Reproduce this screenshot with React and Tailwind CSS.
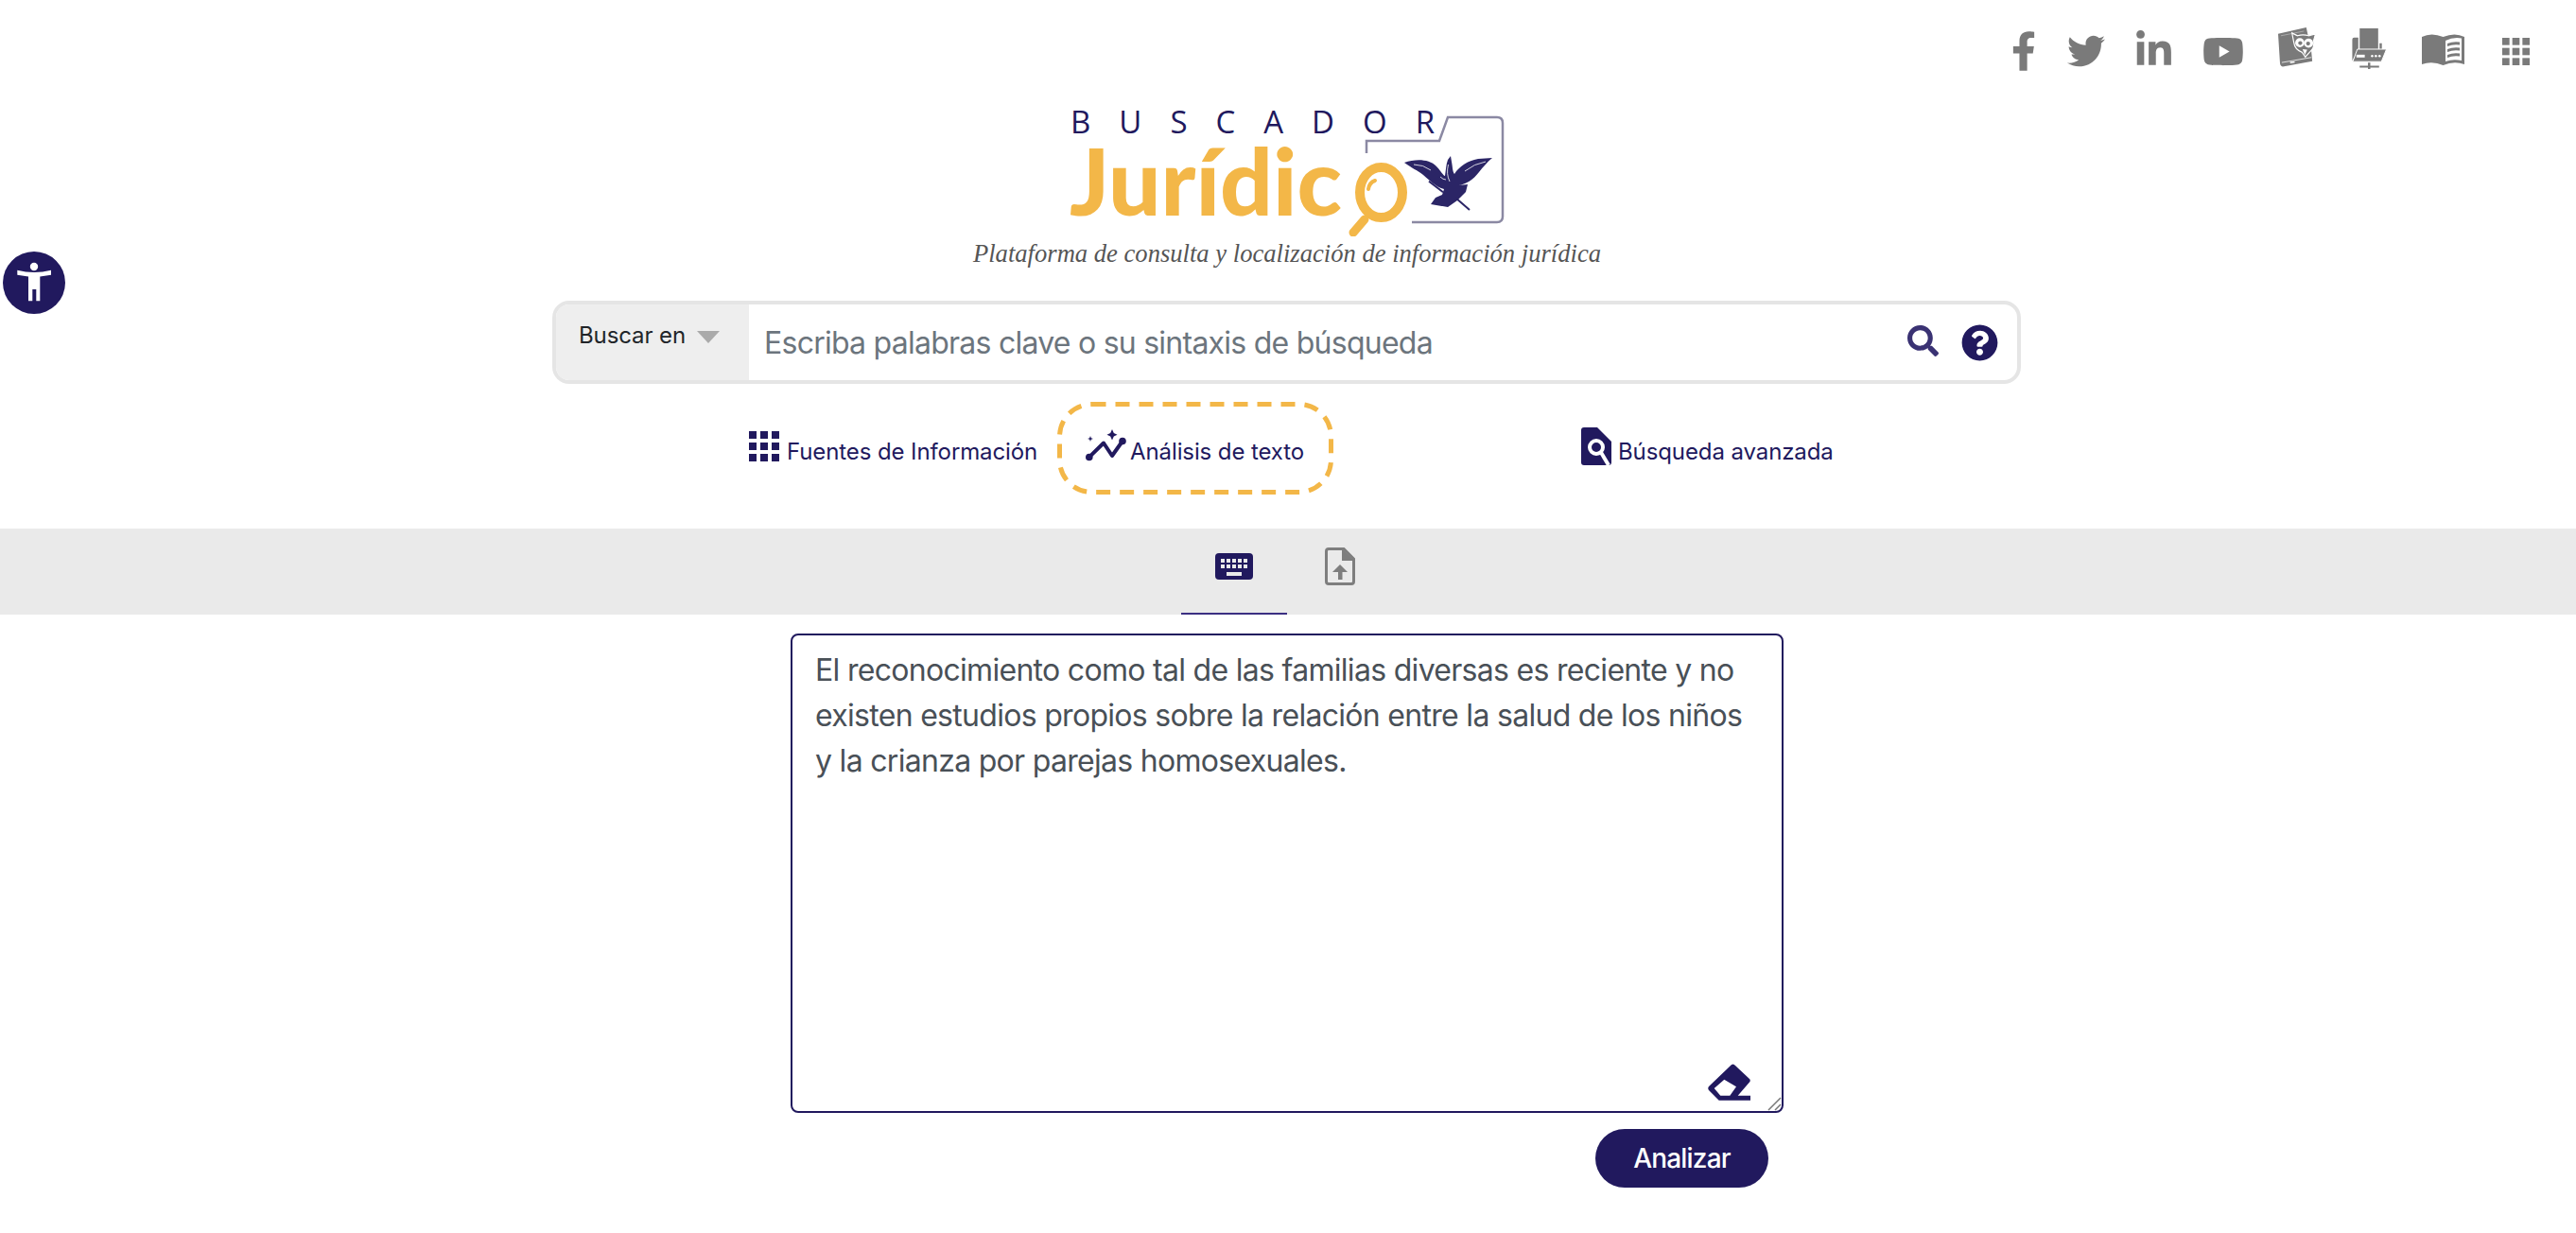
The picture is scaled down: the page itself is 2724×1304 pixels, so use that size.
import React from "react";
import { FaFacebookF, FaTwitter, FaLinkedinIn, FaYoutube, FaSearch, FaQuestionCircle } from "react-icons/fa";

const navy = "#21195e";

function OwlBook() {
  return (
    <svg viewBox="0 0 42 44" className="w-[41px] h-[43px] shrink-0 mb-[7px]" aria-hidden="true">
      <path d="M0 7 L30.500 0 L36 26 L37 36.500 L5 42.500 Q2 42 2 38 Z" fill="#7a7a7a" />
      <path d="M4 38 L36 32.500" stroke="#fff" strokeWidth="0.8" fill="none" />
      <path d="M3 9 L28 4" stroke="#fff" strokeWidth="0.6" fill="none" opacity="0.6" />
      <rect x="13" y="37" width="5" height="1.600" fill="#fff" transform="rotate(-10 15 38)" />
      <path d="M15 6 L21 9 Q27 7 33 9 L40.500 7 L38.500 14 Q40 22 34 27 L29.500 32 L26 27 Q18 24 17 16 Z" fill="#7a7a7a" stroke="#fff" strokeWidth="1.200" />
      <circle cx="23.500" cy="16.500" r="5" fill="#fff" />
      <circle cx="33" cy="17" r="5" fill="#fff" />
      <circle cx="24" cy="17" r="2.200" fill="#7a7a7a" />
      <circle cx="32.500" cy="17.500" r="2.200" fill="#7a7a7a" />
      <path d="M26.500 23.500 L31.500 24 L29 30 Z" fill="#fff" />
    </svg>
  );
}

function Printer() {
  return (
    <svg viewBox="0 0 38 44" className="w-[38px] h-[43px] shrink-0 mb-[6px]" aria-hidden="true">
      <rect x="8" y="0" width="20" height="24" fill="#7a7a7a" />
      <path d="M0 12 Q0 10 2 10 H6.500 V24 L0 35 Z M29.500 16 H32 V23 H29.500 Z" fill="#7a7a7a" />
      <path d="M5.500 22.500 H37 L31.500 36 H0.500 Z" fill="#7a7a7a" stroke="#fff" strokeWidth="1" />
      <rect x="4.500" y="28.500" width="9" height="3" fill="#fff" />
      <circle cx="21.500" cy="30" r="1.300" fill="#fff" />
      <circle cx="25.500" cy="30" r="1.300" fill="#fff" />
      <circle cx="29.500" cy="30" r="1.300" fill="#fff" />
      <path d="M17 37 H19.500 V40.500 H29 V42.500 H19.500 V44 H17 V42.500 H8 V40.500 H17 Z" fill="#7a7a7a" />
    </svg>
  );
}

function OpenBook() {
  return (
    <svg viewBox="0 0 45 34" className="w-[45px] h-[34px] shrink-0 mb-[4px]" aria-hidden="true">
      <path d="M0 4 Q10 -1 22.500 4 Q35 -1 45 4 V33 Q34 29 22.500 34 Q11 29 0 33 Z" fill="#7a7a7a" />
      <path d="M25 8 Q33 4 42 5.500 V29 Q33 27 25 30 Z" fill="#fff" />
      <path d="M27 11 Q33 8.500 40 9.500 V12.500 Q33 11.500 27 14 Z M27 17 Q33 14.500 40 15.500 V18.500 Q33 17.500 27 20 Z M27 23 Q33 20.500 40 21.500 V24.500 Q33 23.500 27 26 Z" fill="#7a7a7a" />
    </svg>
  );
}

function GridIcon({ size, color, gap }) {
  const cell = (24 - 2 * gap) / 3;
  const cells = [];
  for (let r = 0; r < 3; r++) {
    for (let c = 0; c < 3; c++) {
      cells.push(<rect key={`${r}-${c}`} x={c * (cell + gap)} y={r * (cell + gap)} width={cell} height={cell} fill={color} />);
    }
  }
  return <svg viewBox="0 0 24 24" width={size} height={size} className="shrink-0" aria-hidden="true">{cells}</svg>;
}

function AnalysisIcon() {
  return (
    <svg viewBox="0 0 43 34" className="w-[43px] h-[34px] shrink-0 mb-[6px]" aria-hidden="true">
      <path d="M3.600 29.700 L19 14.500 L28 28 L39 12.500" fill="none" stroke={navy} strokeWidth="4" strokeLinejoin="round" />
      <circle cx="3.800" cy="29.500" r="3.800" fill={navy} />
      <circle cx="39" cy="12.500" r="3.800" fill={navy} />
      <path d="M28 0 L29.800 4 L33.500 5.700 L29.800 7.400 L28 11.400 L26.200 7.400 L22.500 5.700 L26.200 4 Z" fill={navy} />
      <path d="M5 7 L5.800 9.200 L8 10 L5.800 10.800 L5 13 L4.200 10.800 L2 10 L4.200 9.200 Z" fill={navy} />
    </svg>
  );
}

function DocSearch() {
  return (
    <svg viewBox="0 0 32 40" className="w-[32px] h-[40px] shrink-0 mb-[4px]" aria-hidden="true">
      <path d="M3 0 H17 L32 15 V37 Q32 40 29 40 H3 Q0 40 0 37 V3 Q0 0 3 0 Z" fill={navy} />
      <circle cx="16" cy="21" r="7" fill="none" stroke="#fff" strokeWidth="4" />
      <path d="M21 26.500 L29 40" stroke="#fff" strokeWidth="4" />
    </svg>
  );
}

function KeyboardIcon() {
  const keys = [];
  for (let r = 0; r < 2; r++) {
    for (let c = 0; c < 5; c++) {
      keys.push(<rect key={`${r}-${c}`} x={6 + c * 6} y={6 + r * 6} width="4" height="4" fill="#eaeaea" />);
    }
  }
  return (
    <svg viewBox="0 0 40 28" className="w-[40px] h-[28px] shrink-0" aria-hidden="true">
      <rect x="0" y="0" width="40" height="28" rx="4" fill={navy} />
      {keys}
      <rect x="12" y="20" width="16" height="4" fill="#eaeaea" />
    </svg>
  );
}

function FileUp() {
  return (
    <svg viewBox="0 0 32 40" className="w-[32px] h-[40px] shrink-0" aria-hidden="true">
      <path d="M4 1.500 H20 L30.500 12 V36 Q30.500 38.500 28 38.500 H4 Q1.500 38.500 1.500 36 V4 Q1.500 1.500 4 1.500 Z" fill="none" stroke="#7e7e7e" strokeWidth="3" />
      <path d="M18 1 L31 14 H18 Z" fill="#7e7e7e" />
      <path d="M16 18 L24 26 H18.500 V34 H14 V26 H8 Z" fill="#7e7e7e" />
    </svg>
  );
}

function EraserIcon() {
  return (
    <svg viewBox="0 0 45 39" className="absolute right-[33px] bottom-[11px] w-[45px] h-[39px]" aria-hidden="true">
      <path
        fillRule="evenodd"
        d="M25 1 Q26.700 0 28.500 1.500 L44 16 Q45.500 17.700 44 19.500 L31.700 33.700 H45 V38.700 H11.700 L1 28 Q-0.500 26 1 24 Z M17.300 16.700 L6.700 26 L13.300 33.700 H23.300 L30 24.300 Z"
        fill={navy}
      />
    </svg>
  );
}

function AccessIcon() {
  return (
    <svg viewBox="0 0 66 66" className="w-full h-full" aria-hidden="true">
      <circle cx="33" cy="16" r="4.200" fill="#fff" />
      <path d="M15.300 19.700 Q33 24.500 51 19.700 V24.700 L39.300 26.500 V52.300 H35.300 V40 H31.300 V52.300 H27 V26.500 L15.300 24.700 Z" fill="#fff" />
    </svg>
  );
}

function Logo() {
  return (
    <div className="relative w-[470px] h-[142px] shrink-0">
      <svg viewBox="0 0 470 142" className="absolute inset-0 w-full h-full" aria-hidden="true">
        <path d="M318 54 V41 H395 L404 16 H456 Q462 16 462 22 V121 Q462 127 456 127 H366" fill="none" stroke="#8b89a3" strokeWidth="2.500" />
        <path
          d="M358 64 C370 60 384 60 392 68 C397 73 399 78 401 78 C402 72 402 66 404 61 L407 57 L408 63 C409 68 409 74 411 76 C416 68 425 62 436 60 L451 59 C446 63 441 69 437 74 C431 82 423 87 415 88 L425 87 L423 95 L417 101 L414 104 L404 111 L386 108 L391 101 L398 98 L400 92 C392 90 386 84 378 77 C372 72 366 70 358 64 Z"
          fill="#2b2566"
        />
        <path d="M384 83.700 L399 95.300 M412 101 L427 114" stroke="#2b2566" strokeWidth="2" />
        <path d="M404.500 66 Q402 76 406 84 M396 79 Q399 82 402 82 M368 66 Q378 66 386 72 M444 63 Q432 65 422 73" stroke="#fff" strokeWidth="0.800" fill="none" />
      </svg>
      <div className="absolute left-[5px] top-[8px] font-['Open_Sans',sans-serif] font-medium text-[33px] leading-[26px] text-[#21195e] tracking-[30px] whitespace-nowrap">BUSCADOR</div>
      <div className="absolute left-[4px] top-[40px] font-['Lato',sans-serif] font-black text-[98px] leading-[84px] text-[#f3b748] whitespace-nowrap">Jurídic</div>
      <svg viewBox="0 0 470 142" className="absolute inset-0 w-full h-full" aria-hidden="true">
        <ellipse cx="333.500" cy="95.500" rx="22.500" ry="26.500" fill="#fff" stroke="#f3b748" strokeWidth="10" />
        <path d="M316 124 L304 138" stroke="#f3b748" strokeWidth="9" strokeLinecap="round" />
        <path d="M320 92 Q321 85 327 83" fill="none" stroke="#f3b748" strokeWidth="4" strokeLinecap="round" />
      </svg>
    </div>
  );
}

export default function App() {
  return (
    <div className="relative w-full h-[1304px] overflow-hidden bg-white font-['Inter',sans-serif]">
      <div className="absolute left-[3px] top-[266px] w-[66px] h-[66px] rounded-full bg-[#21195e]">
        <AccessIcon />
      </div>

      <header className="flex justify-end items-center h-[62px] mt-[23px] pr-[49px] text-[#7a7a7a]">
        <div className="flex items-center">
          <FaFacebookF className="w-[26px] h-[42px] mr-[33px]" />
          <FaTwitter className="w-[40px] h-[40px] mr-[33px]" />
          <FaLinkedinIn className="w-[37px] h-[42px] mr-[33px] mb-[2px]" />
          <FaYoutube className="w-[44px] h-[39px] mr-[36px]" />
          <OwlBook />
          <span className="w-[37px]" />
          <Printer />
          <span className="w-[36px]" />
          <OpenBook />
          <span className="w-[40px]" />
          <GridIcon size={29} color="#7a7a7a" gap={2.5} />
        </div>
      </header>

      <div className="flex flex-col items-center">
        <div className="mt-[23px]"><Logo /></div>
        <p className="mt-[3px] mr-[2px] font-['Liberation_Serif',serif] italic text-[26.6px] leading-[30px] text-[#555555] whitespace-nowrap">Plataforma de consulta y localización de información jurídica</p>
      </div>

      <div className="ml-[584px] w-[1553px] h-[88px] mt-[35px] flex border-4 border-[#e5e5e5] rounded-[18px] overflow-hidden">
        <div className="w-[204px] shrink-0 bg-[#eeeeee] flex items-start pt-[17px] pl-[24px] text-[24px] leading-[32px] text-[#212529]">
          <span className="tracking-[-0.1px]">Buscar en</span>
          <span className="ml-[12px] mt-[11px] w-0 h-0 border-l-[12px] border-r-[12px] border-t-[13px] border-l-transparent border-r-transparent border-t-[#aaaaaa]" />
        </div>
        <div className="flex-1 flex items-center pl-[16px] pr-[20px]">
          <span className="flex-1 mt-[2px] text-[32px] leading-[40px] text-[#6c757d] tracking-[-0.75px]">Escriba palabras clave o su sintaxis de búsqueda</span>
          <FaSearch className="w-[33px] h-[33px] text-[#3a3273] mr-[24px] mb-[4px]" />
          <FaQuestionCircle className="w-[39px] h-[39px] text-[#21195e]" />
        </div>
      </div>

      <nav className="flex items-center h-[98px] mt-[19px] pl-[792px] text-[24px] tracking-[-0.1px] text-[#21195e]">
        <div className="flex items-center w-[326px]">
          <span className="mb-[4px] mr-[8px]"><GridIcon size={32} color={navy} gap={3} /></span>
          <span className="whitespace-nowrap mt-[8px]">Fuentes de Información</span>
        </div>
        <div className="relative flex items-center w-[292px] h-[98px] pl-[30px]">
          <svg viewBox="0 0 292 98" className="absolute inset-0 w-full h-full" aria-hidden="true">
            <rect x="2.500" y="2.500" width="287" height="93" rx="34" fill="none" stroke="#f3b748" strokeWidth="5" strokeDasharray="15 10" />
          </svg>
          <AnalysisIcon />
          <span className="whitespace-nowrap ml-[4px] mt-[8px]">Análisis de texto</span>
        </div>
        <div className="flex items-center ml-[262px]">
          <DocSearch />
          <span className="whitespace-nowrap ml-[7px] mt-[8px]">Búsqueda avanzada</span>
        </div>
      </nav>

      <div className="h-[91px] mt-[36px] bg-[#eaeaea] flex pl-[1249px]">
        <div className="relative w-[112px] h-full flex items-start justify-center pt-[26px]">
          <KeyboardIcon />
          <span className="absolute left-0 right-0 bottom-0 h-[2px] bg-[#3b2f82]" />
        </div>
        <div className="pt-[20px] ml-[40px]"><FileUp /></div>
      </div>

      <div className="relative w-[1050px] h-[507px] mt-[20px] ml-[836px] border-2 border-[#21195e] rounded-[8px] px-[24px] pt-[13px] text-[32px] leading-[48px] tracking-[-0.7px] text-[#495057]">
        <p>El reconocimiento como tal de las familias diversas es reciente y no existen estudios propios sobre la relación entre la salud de los niños y la crianza por parejas homosexuales.</p>
        <EraserIcon />
        <svg viewBox="0 0 16 16" className="absolute right-0 bottom-0 w-[16px] h-[16px]" aria-hidden="true">
          <path d="M2 15 L15 2 M9 15 L15 9" stroke="#777777" strokeWidth="1.500" />
        </svg>
      </div>

      <div className="flex justify-end w-[1870px] mt-[17px]">
        <button className="w-[183px] h-[62px] rounded-full bg-[#21195e] text-white text-[28px] font-medium tracking-[-0.8px]">Analizar</button>
      </div>
    </div>
  );
}
